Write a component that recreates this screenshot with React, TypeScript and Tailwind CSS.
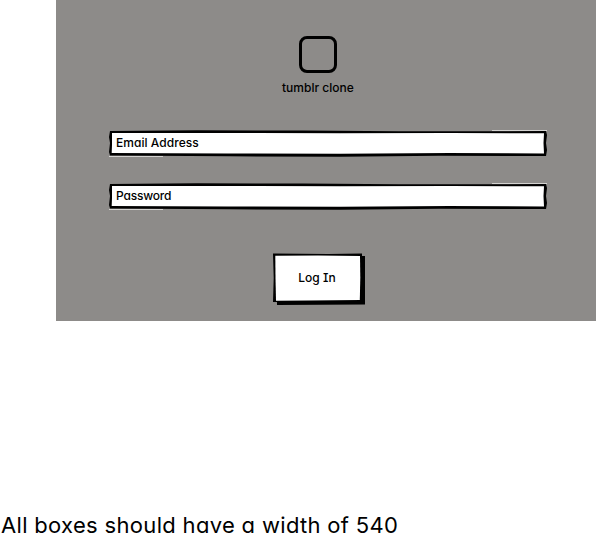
type FieldProps = { label: string; spacing: string };

function SketchField({ label, spacing }: FieldProps) {
  return (
    <label className="relative flex h-[27px] w-[439px] items-center pl-[7px]">
      <svg className="absolute inset-0" width="439" height="27" viewBox="0 0 439 27" aria-hidden="true">
        <path d="M0 26V27H54V26ZM383 0H438V1H383Z" fill="#d4d3d1" />
        <path d="M1 1L88 .3L193 .6L290 1.3L380 1.2L437 1L438 5L437 13L438 20L437 26L330 25.8L231 26.7L120 26.3L1 25.5L0 22L1 13L0 7Z" fill="#000" />
        <path d="M3 3L100 3L231 3.3L340 3L435 3.3L434.5 13L435 23.5L340 23L231 23.7L120 23.6L2.7 23L3 15Z" fill="#fff" />
      </svg>
      <span className={`relative -top-[1px] text-[12px] font-medium leading-4 whitespace-nowrap ${spacing}`}>{label}</span>
    </label>
  );
}

export default function App() {
  return (
    <main className="h-[542px] w-[596px] overflow-hidden bg-white text-black font-['Inter',sans-serif] [font-feature-settings:'cv11','cv08']">
      <section className="ml-[56px] flex h-[321px] w-[540px] flex-col bg-[#8d8b89]">
        <div className="ml-[243px] mt-[36px] h-[37px] w-[38px] rounded-[8px] border-[3px] border-black" />
        <p className="ml-[226px] mt-[7px] text-[12px] font-medium leading-4 tracking-[0px] whitespace-nowrap">tumblr clone</p>
        <div className="ml-[53px] mt-[34px] flex flex-col gap-[26px]">
          <SketchField label="Email Address" spacing="tracking-[0.05px]" />
          <SketchField label="Password" spacing="tracking-[-0.2px]" />
        </div>
        <button className="relative ml-[217px] mt-[43px] flex h-[52px] w-[92px] items-center justify-center pb-[2px] pr-[4px]">
          <svg className="absolute inset-0" width="92" height="52" viewBox="0 0 92 52" aria-hidden="true">
            <path d="M4 3H92V51.5L4 52Z" fill="#000" />
            <path d="M0 .5L55 1L89 .5V50L0 49L.7 25Z" fill="#000" />
            <path d="M2.3 2.7L45 2.5L87 3L87.3 25L86.8 47L35 47.5L3 47.8L2.5 25Z" fill="#fff" />
          </svg>
          <span className="relative text-[12px] font-medium leading-4 tracking-[0.05px]">Log In</span>
        </button>
      </section>
      <p className="ml-[1px] mt-[188px] text-[22px] leading-8 tracking-[0.32px] whitespace-nowrap">All boxes should have a width of 540</p>
    </main>
  );
}
